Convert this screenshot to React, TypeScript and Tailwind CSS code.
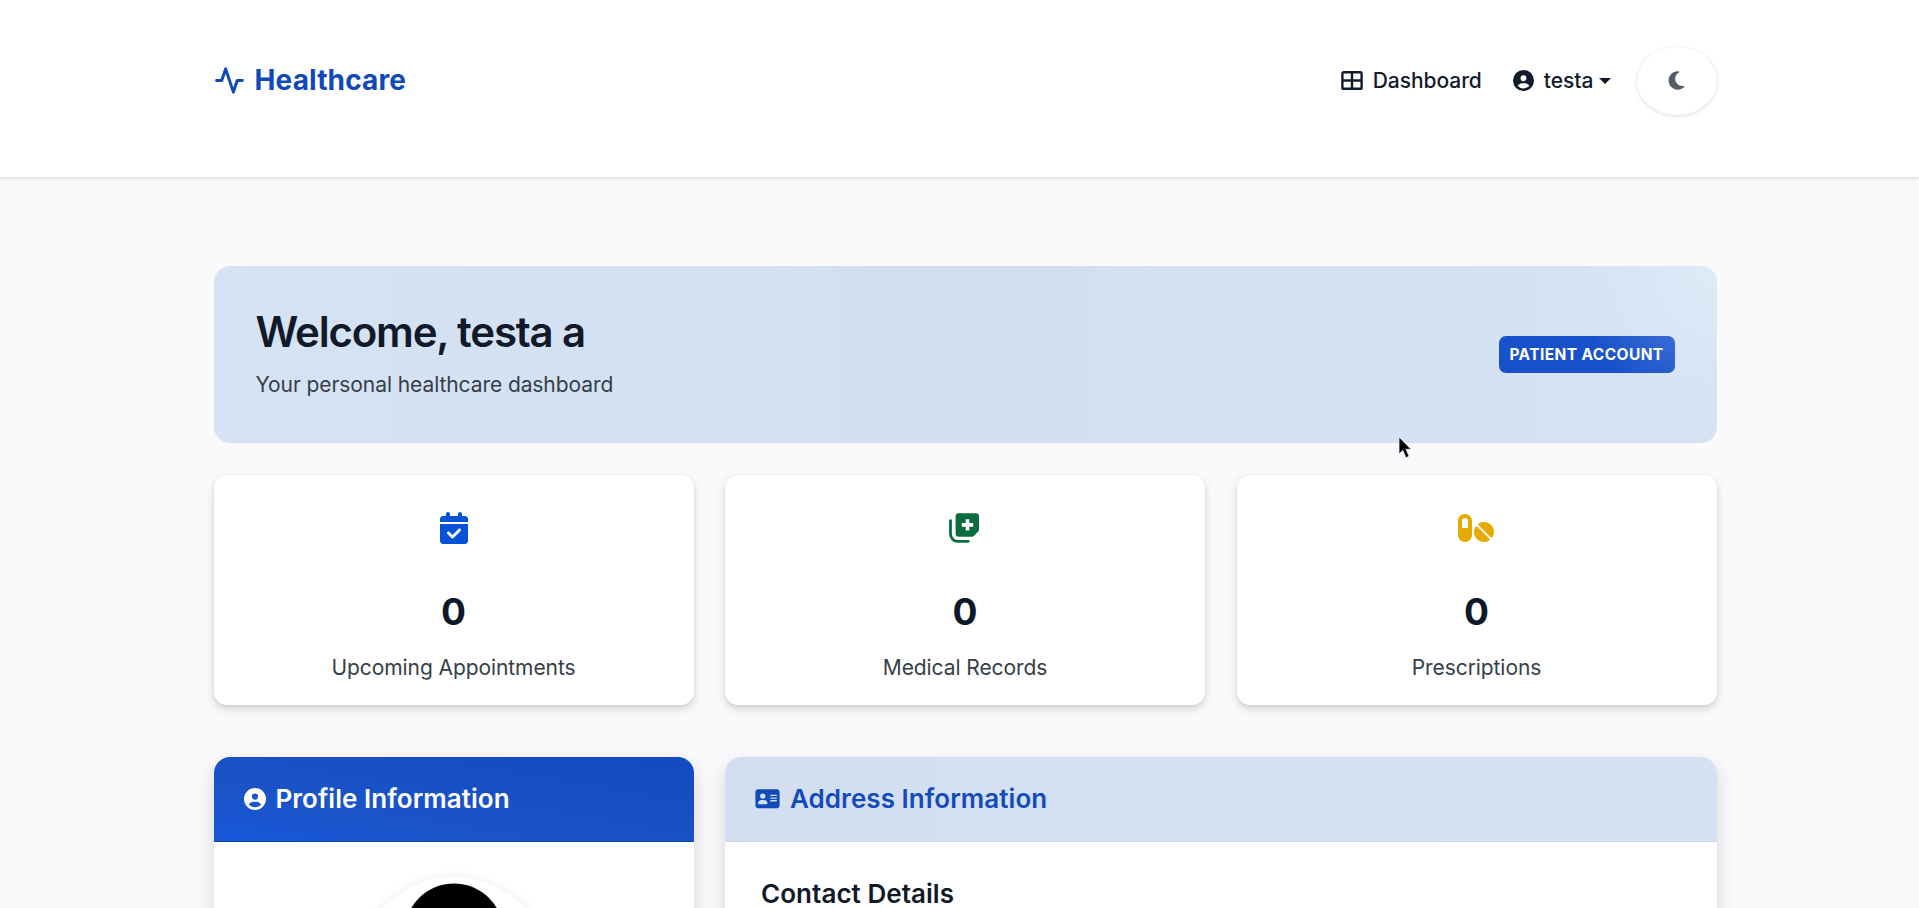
import type { ReactNode } from "react";
import { FiActivity } from "react-icons/fi";
import { FaAddressCard, FaCalendarCheck, FaCircleUser, FaMoon, FaPills } from "react-icons/fa6";

function GridIcon() {
  return (
    <svg width="22" height="19" viewBox="0 0 22 19" fill="none" stroke="currentColor" strokeWidth="2.4">
      <rect x="1.4" y="1.2" width="19.2" height="16.6" rx="1.4" />
      <path d="M11 1v17M1 9.5h20" />
    </svg>
  );
}

function RecordsIcon() {
  return (
    <svg width="30" height="32" viewBox="0 0 30 32" fill="none" className="mr-[2px]">
      <path
        fillRule="evenodd"
        fill="currentColor"
        d="M9.6 1.2H27a3 3 0 0 1 3 3v13.4a3 3 0 0 1-.9 2.1L25 23.8a3 3 0 0 1-2.1.9H9.6a3 3 0 0 1-3-3V4.2a3 3 0 0 1 3-3Zm7.1 6v3.9h-3.9v3.6h3.9v3.9h3.6v-3.9h3.9v-3.6h-3.9V7.2h-3.6Z"
      />
      <path d="M1.5 8.7v13.4c0 4 3.2 7.2 7.2 7.2h10.6" stroke="currentColor" strokeWidth="2.8" strokeLinecap="round" />
    </svg>
  );
}

function Header() {
  return (
    <header className="relative h-[177px] bg-white pt-[46px] shadow-[0_1px_4px_rgba(0,0,0,0.15)]">
      <div className="ml-[213.5px] flex h-[69px] w-[1503px] items-center justify-between">
        <div className="flex items-center gap-[10px] text-[#1049b8]">
          <FiActivity size={31} strokeWidth={2.3} />
          <span className="mb-px text-[28px] leading-[34px] font-bold tracking-[0.13px]">Healthcare</span>
        </div>
        <nav className="flex items-center text-[21px] leading-[30px] font-medium text-[#111b2b]">
          <a className="flex items-center gap-[10px] tracking-[-0.05px]">
            <GridIcon />
            Dashboard
          </a>
          <a className="ml-[31px] flex items-center">
            <FaCircleUser size={21} />
            <span className="ml-[10px]">testa</span>
            <span className="ml-[5.5px] border-x-[6px] border-t-[6px] border-x-transparent border-t-[#111b2b]" />
          </a>
          <button className="ml-[26px] flex h-[68px] w-[79.5px] items-center justify-center rounded-[50%] bg-white text-[#545d66] shadow-[0_1px_4px_rgba(0,0,0,0.14)]">
            <FaMoon size={21} />
          </button>
        </nav>
      </div>
    </header>
  );
}

function Hero() {
  return (
    <section className="relative flex h-[177px] items-center justify-between overflow-hidden rounded-[16px] bg-linear-to-r from-[#d6e3f4] via-[#d2dff0] to-[#d6e3f4] px-[42px]">
      <div>
        <h1 className="text-[42px] leading-[48px] font-semibold tracking-[-1.2px] text-[#101a2a]">Welcome, testa a</h1>
        <p className="mt-[13px] text-[21px] leading-[32px] tracking-[-0.08px] text-[#353e4a]">Your personal healthcare dashboard</p>
      </div>
      <span className="mt-px flex h-[37px] w-[176px] items-center justify-center rounded-[7px] bg-[#1852cb] pt-px text-[15.5px] font-bold tracking-[0.4px] text-white">
        PATIENT ACCOUNT
      </span>
      <div className="absolute -top-[170px] -right-[170px] size-[340px] bg-radial from-[#f0f8ff]/35 to-transparent to-60%" />
    </section>
  );
}

function Stat({ icon, label, color }: { icon: ReactNode; label: string; color: string }) {
  return (
    <div className="flex h-[230px] flex-col items-center rounded-[13px] bg-white pt-[37px] shadow-[0_4px_8px_rgba(0,0,0,0.16),0_1px_3px_rgba(0,0,0,0.06)]">
      <div className={`h-8 ${color}`}>{icon}</div>
      <div className="mt-[48px] text-[37px] leading-[40px] font-bold text-[#0d1828]">0</div>
      <div className="mt-[20px] text-[21px] leading-[32px] tracking-[-0.08px] text-[#353e49]">{label}</div>
    </div>
  );
}

export default function App() {
  return (
    <div className="relative h-[908px] w-full overflow-hidden bg-[#fafafd] font-['Inter',sans-serif]">
      <Header />
      <main className="ml-[213.5px] w-[1503px] pt-[88.5px]">
        <Hero />
        <div className="mt-[32px] grid grid-cols-3 gap-x-[31.5px]">
          <Stat icon={<FaCalendarCheck size={32} />} label="Upcoming Appointments" color="text-[#0453d6]" />
          <Stat icon={<RecordsIcon />} label="Medical Records" color="text-[#0b6d3d]" />
          <Stat icon={<FaPills size={32} className="mr-px w-9" />} label="Prescriptions" color="text-[#e6ab00]" />
        </div>
        <div className="mt-[52px] grid grid-cols-3 gap-x-[31.5px]">
          <section className="h-[500px] overflow-hidden rounded-[16px] bg-white shadow-[0_8px_20px_rgba(0,0,0,0.15)]">
            <h2 className="flex h-[85px] items-center gap-[10px] border-b border-[#0d43ad] bg-linear-to-tr from-[#1757da] via-[#1b54c9] via-30% to-[#124abf] pl-[30px] text-[26px] font-semibold tracking-[0.05px] text-white">
              <FaCircleUser size={22} />
              Profile Information
            </h2>
            <div className="mx-auto mt-[35px] size-[196px] overflow-hidden rounded-full border-[6px] border-white bg-white shadow-[0_2px_12px_rgba(0,0,0,0.1)]">
              <svg viewBox="0 0 184 184" className="size-full">
                <circle cx="92" cy="50" r="49.5" />
                <path d="M16 184c0-44 34-76 76-76s76 32 76 76Z" />
              </svg>
            </div>
          </section>
          <section className="col-span-2 h-[500px] overflow-hidden rounded-[16px] bg-white shadow-[0_8px_20px_rgba(0,0,0,0.15)]">
            <h2 className="flex h-[85px] items-center gap-[10px] border-b border-[#c9d6ea] bg-linear-to-r from-[#d3dff0] to-[#d6e2f3] pl-[30px] text-[26px] font-semibold tracking-[0.05px] text-[#134bbb]">
              <FaAddressCard size={21.5} className="w-[25px]" />
              Address Information
            </h2>
            <h3 className="mt-[37px] pl-[36px] text-[26px] leading-[30px] font-semibold tracking-[0.05px] text-[#0f1928]">Contact Details</h3>
          </section>
        </div>
      </main>
      <svg className="absolute top-[436px] left-[1398px]" width="15" height="24" viewBox="0 0 15 24">
        <path d="M1 1v17l3.8-3.6 3.2 7.3 3.1-1.4-3.2-7h5.1Z" fill="#000" stroke="#e8eef7" strokeWidth=".8" />
      </svg>
    </div>
  );
}
